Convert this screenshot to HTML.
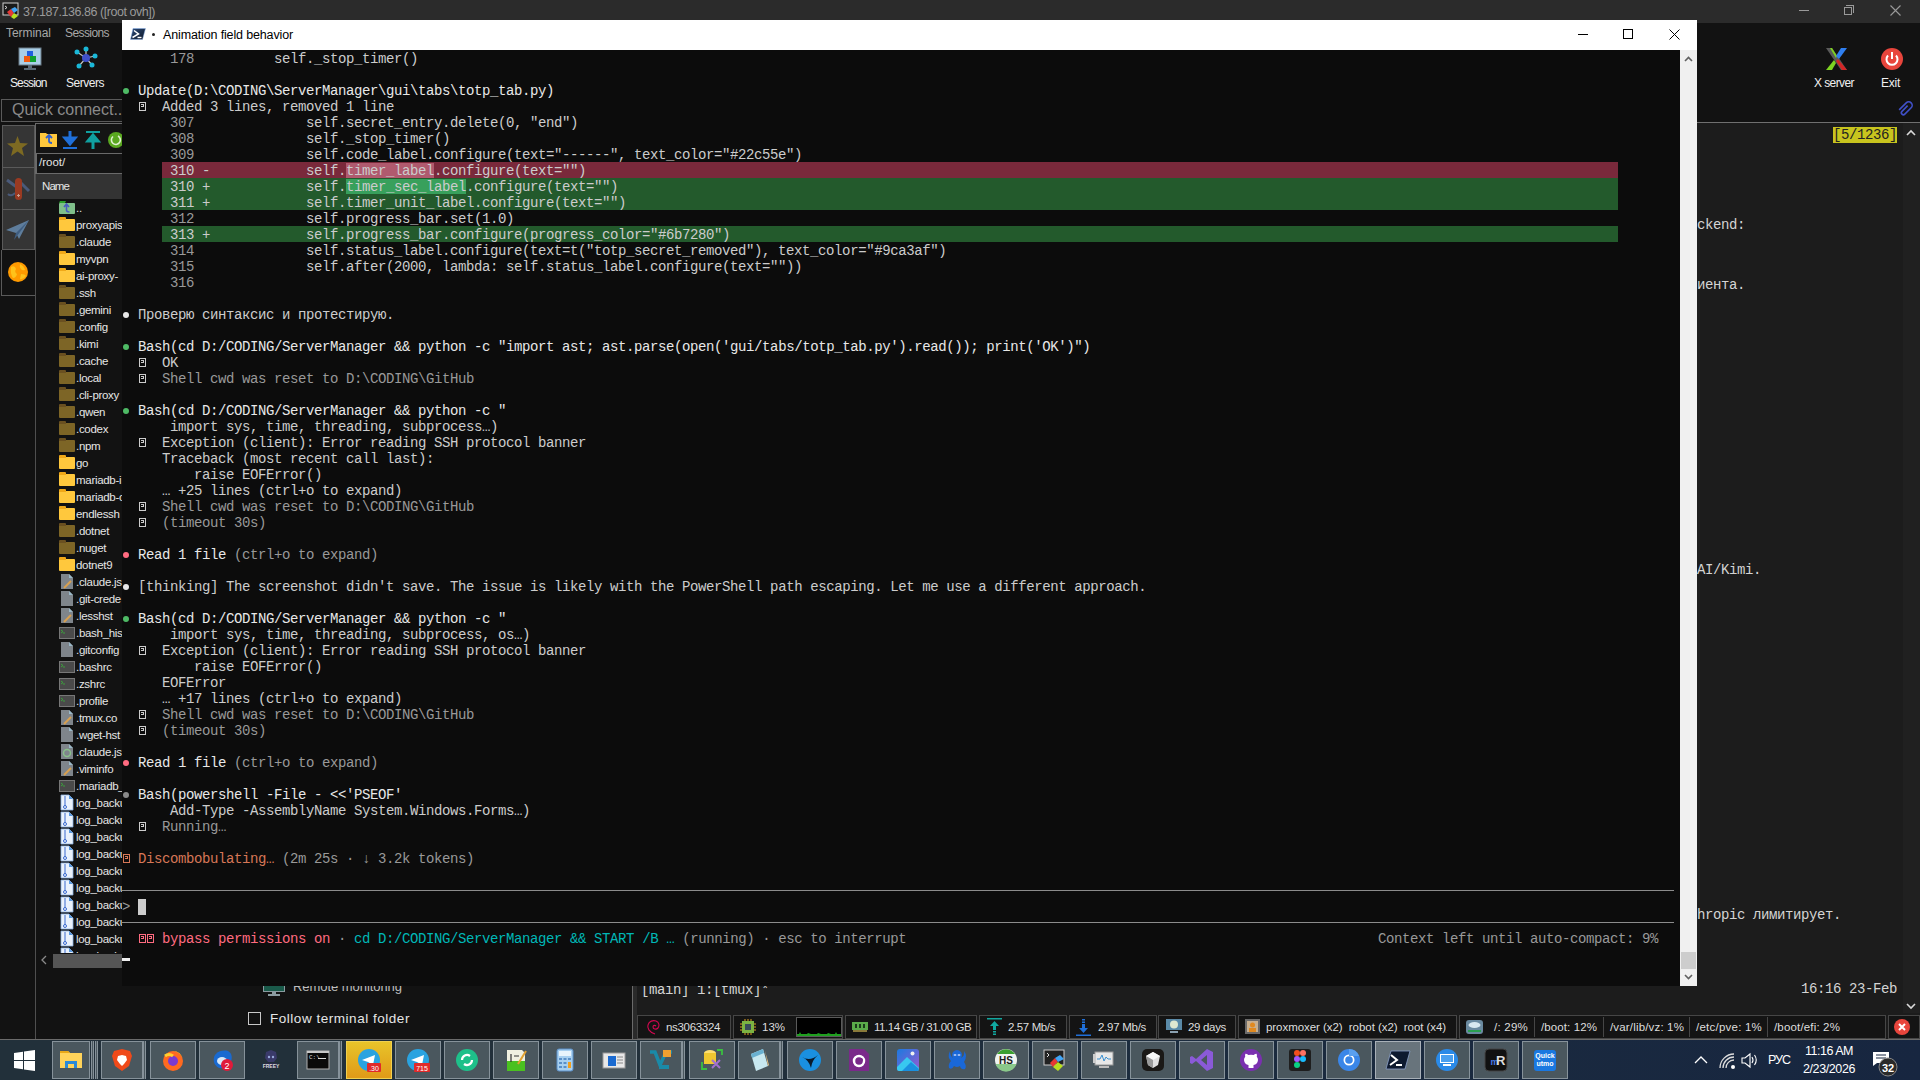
<!DOCTYPE html>
<html><head><meta charset="utf-8">
<style>
*{margin:0;padding:0;box-sizing:border-box}
html,body{width:1920px;height:1080px;overflow:hidden;background:#121212;font-family:"Liberation Sans",sans-serif;position:relative}
.abs{position:absolute}
svg{position:absolute;overflow:visible}
/* moba title bar */
#mtb{position:absolute;left:0;top:0;width:1920px;height:23px;background:#2b2b2b}
.ttl{position:absolute;left:23px;top:5px;font-size:12px;color:#9a9a9a;white-space:nowrap;letter-spacing:-0.2px}
.mtxt{position:absolute;font-size:12px;color:#c8c8c8;white-space:nowrap}
/* PS window */
#ps{position:absolute;left:122px;top:20px;width:1575px;height:966px;background:#0c0c0c}
#ps .tb{position:absolute;left:0;top:0;width:1575px;height:30px;background:#ffffff}
#ps .tb .tt{position:absolute;left:41px;top:8px;font-size:12px;color:#000;white-space:nowrap}
#term{position:absolute;left:0;top:30px;width:1558px;height:936px;overflow:hidden;font-family:"Liberation Mono",monospace;font-size:14px;letter-spacing:-0.4px}
.r{position:absolute;left:0;height:16px;width:1558px}
.r .t{position:absolute;left:0;top:1px;white-space:pre;line-height:16px;height:16px}
.dbg{position:absolute;left:40px;width:1456px;top:0;height:16px}
.tf{display:inline-block;width:8px;height:16px;position:relative;vertical-align:top}
.tf::before{content:"";position:absolute;left:1px;top:3px;width:7px;height:9px;border:1px solid currentColor;box-sizing:border-box}
.tf::after{content:"";position:absolute;left:3px;top:5px;width:3px;height:3px;border:1px solid currentColor;border-left:none;box-sizing:border-box}
.bu{display:inline-block;width:8px;height:16px;position:relative;vertical-align:top}
.bu::before{content:"";position:absolute;left:1px;top:5px;width:6px;height:6px;border-radius:50%;background:var(--c)}
.cur{display:inline-block;width:8px;height:16px;background:#cccccc;vertical-align:top}
.hl{position:absolute;left:0;height:1px;background:#8c8c8c;width:1552px}
#sb{position:absolute;left:1558px;top:30px;width:17px;height:936px;background:#f0f0f0}
/* files */
.fr{position:absolute;left:59px;height:17px;width:63px;overflow:hidden;white-space:nowrap}
.fn{position:absolute;left:17px;top:3px;font-size:11.5px;color:#e6e6e6;letter-spacing:-0.3px}
.fo{position:absolute;left:0;top:3px;width:16px;height:12px;background:var(--c);border-radius:1px}
.fo::before{content:"";position:absolute;left:0;top:-2px;width:7px;height:3px;background:var(--t);border-radius:1px 1px 0 0}
.dc{position:absolute;left:2px;top:1px;width:12px;height:15px;background:#8c8c8c;clip-path:polygon(0 0,65% 0,100% 30%,100% 100%,0 100%)}
.shi{position:absolute;left:0;top:3px;width:16px;height:12px;background:#3c3c3c;border:1px solid #5a5a5a}
.zp{position:absolute;left:2px;top:1px;width:12px;height:15px;background:#dbe9f9;border:1px solid #5a8fd0}
/* moba term */
.mt{position:absolute;font-family:"Liberation Mono",monospace;font-size:14px;letter-spacing:-0.4px;color:#d4d4d4;white-space:pre;line-height:15px}
/* status */
.sp{position:absolute;top:1015px;height:24px;background:#141414;border:1px solid #464646}
.st{position:absolute;top:1021px;font-size:11px;color:#dedede;white-space:nowrap;letter-spacing:-0.1px}
.ss{position:absolute;top:1017px;width:1px;height:20px;background:#464646}
/* taskbar */
#tbar{position:absolute;left:0;top:1040px;width:1920px;height:40px;background:linear-gradient(90deg,#22303a 0%,#22303a 35%,#1c2c3e 60%,#172640 100%)}
.tbi{position:absolute;top:1041px;width:46px;height:38px;border:1px solid #86929a;background:#4a575e}
.tsep{position:absolute;top:1041px;width:3px;height:38px;border-left:1px solid #86929a;border-right:1px solid #86929a;background:#4a575e}
</style></head><body>

<!-- MobaXterm title bar -->
<div id="mtb">
  <svg style="left:2px;top:2px" width="18" height="18" viewBox="0 0 18 18">
    <rect x="1" y="1" width="15" height="12" fill="#1a1a1a" stroke="#d0d0d0" stroke-width="1"/>
    <path d="M3 4 L5 5.5 L3 7" stroke="#ddd" fill="none" stroke-width="1"/>
    <path d="M5 10 L9 7 L12 11 L9 15 Z" fill="#e53935"/>
    <path d="M9 7 L13 5 L16 8 L12 11 Z" fill="#42a5f5"/>
    <path d="M9 15 L12 11 L16 14 L12 17 Z" fill="#b8e020"/>
  </svg>
  <div class="ttl" style="letter-spacing:-0.454px;font-size:12.5px">37.187.136.86 ([root ovh])</div>
  <div class="abs" style="left:1799px;top:10px;width:10px;height:1px;background:#9a9a9a"></div>
  <div class="abs" style="left:1844px;top:7px;width:8px;height:8px;border:1px solid #9a9a9a"></div>
  <div class="abs" style="left:1846px;top:5px;width:8px;height:8px;border-top:1px solid #9a9a9a;border-right:1px solid #9a9a9a"></div>
  <svg style="left:1890px;top:5px" width="11" height="11" viewBox="0 0 11 11"><path d="M0.5 0.5 L10.5 10.5 M10.5 0.5 L0.5 10.5" stroke="#9a9a9a" stroke-width="1.1"/></svg>
</div>

<!-- Moba menu / toolbar -->
<div class="mtxt" style="letter-spacing:-0.045px;left:6px;top:26px;color:#a8a8a8">Terminal</div>
<div class="mtxt" style="letter-spacing:-0.586px;left:65px;top:26px;color:#a8a8a8">Sessions</div>
<svg style="left:19px;top:48px" width="23" height="23" viewBox="0 0 23 23">
  <rect x="0" y="0" width="22" height="17" fill="#a9cfe8" stroke="#6a7a86" stroke-width="1"/>
  <rect x="9" y="17" width="4" height="3" fill="#5a6a76"/><rect x="5" y="20" width="12" height="2" fill="#5a6a76"/>
  <rect x="8" y="3" width="6" height="6" fill="#1f5fe0"/>
  <rect x="5" y="8" width="6" height="6" fill="#f05a10"/>
  <rect x="11" y="8" width="6" height="6" fill="#10a030"/>
</svg>
<svg style="left:74px;top:47px" width="24" height="22" viewBox="0 0 24 22">
  <g stroke="#c8c8c8" stroke-width="1.2"><line x1="12" y1="11" x2="3" y2="5"/><line x1="12" y1="11" x2="12" y2="2"/><line x1="12" y1="11" x2="21" y2="9"/><line x1="12" y1="11" x2="5" y2="19"/><line x1="12" y1="11" x2="18" y2="18"/></g>
  <circle cx="12" cy="11" r="4" fill="#3f4fc8"/>
  <circle cx="3" cy="5" r="2.5" fill="#1ab8d8"/><circle cx="12" cy="2" r="2.5" fill="#1ab8d8"/><circle cx="21" cy="9" r="2.5" fill="#1ab8d8"/><circle cx="5" cy="19" r="2.5" fill="#1ab8d8"/><circle cx="18" cy="18" r="2.5" fill="#1ab8d8"/>
</svg>
<div class="mtxt" style="letter-spacing:-0.884px;left:10px;top:76px;color:#f0f0f0">Session</div>
<div class="mtxt" style="letter-spacing:-0.478px;left:66px;top:76px;color:#f0f0f0">Servers</div>

<svg style="left:1825px;top:48px" width="23" height="23" viewBox="0 0 23 23">
  <path d="M1 0 L7 0 L22 22 L16 22 Z" fill="#5a5a5a"/>
  <path d="M5 0 L7 0 L12 8 L11 10 Z" fill="#7ed321"/>
  <path d="M16 0 L22 0 L14 11 L11 8 Z" fill="#2f7ff0"/>
  <path d="M11 13 L13 11 L22 22 L17 22 Z" fill="#e02020" opacity="0.9"/>
  <path d="M1 22 L7 22 L11 15 L9 12 Z" fill="#7ed321"/>
</svg>
<div class="mtxt" style="letter-spacing:-0.584px;left:1814px;top:76px;color:#f0f0f0">X server</div>
<svg style="left:1881px;top:48px" width="23" height="23" viewBox="0 0 23 23">
  <circle cx="11" cy="11" r="11" fill="#e8453c"/>
  <path d="M7 7.5 A5.5 5.5 0 1 0 15 7.5" stroke="#fff" stroke-width="2" fill="none"/>
  <line x1="11" y1="4" x2="11" y2="11" stroke="#fff" stroke-width="2"/>
</svg>
<div class="mtxt" style="letter-spacing:-0.250px;left:1881px;top:76px;color:#f0f0f0">Exit</div>
<svg style="left:1896px;top:99px" width="19" height="19" viewBox="0 0 19 19">
  <g transform="rotate(45 9.5 9.5)"><path d="M6 15 V5 A3.5 3.5 0 0 1 13 5 V14 A2 2 0 0 1 9 14 V6" stroke="#4050c8" stroke-width="1.6" fill="none" transform="translate(0,0)"/></g>
</svg>

<!-- quick connect -->
<div class="abs" style="left:1px;top:99px;width:122px;height:23px;border:1px solid #5a5a5a;background:#141414"></div>
<div class="abs" style="left:12px;top:101px;font-size:16px;color:#8a8a8a;white-space:nowrap">Quick connect...</div>

<!-- sidebar tabs -->
<div class="abs" style="left:2px;top:125px;width:33px;height:125px;background:#353535;border:1px solid #5a5a5a"></div>
<div class="abs" style="left:3px;top:167px;width:32px;height:1px;background:#5a5a5a"></div>
<div class="abs" style="left:3px;top:209px;width:32px;height:1px;background:#5a5a5a"></div>
<div class="abs" style="left:1px;top:250px;width:35px;height:46px;background:#121212;border-left:1px solid #5a5a5a;border-bottom:1px solid #5a5a5a"></div>
<div class="abs" style="left:35px;top:124px;width:1px;height:916px;background:#4f4f4f"></div>
<svg style="left:7px;top:136px" width="21" height="20" viewBox="0 0 21 20"><path d="M10.5 0 L13 7 L21 7.5 L15 12 L17 20 L10.5 15.5 L4 20 L6 12 L0 7.5 L8 7 Z" fill="#7d6a22"/></svg>
<svg style="left:6px;top:177px" width="24" height="24" viewBox="0 0 24 24">
  <path d="M1 3 L12 11" stroke="#4a5a7a" stroke-width="3"/><path d="M23 14 L15 6" stroke="#4a5a7a" stroke-width="3"/><path d="M2 17 Q5 20 9 16" stroke="#4a5a7a" stroke-width="2" fill="none"/>
  <rect x="9" y="1" width="7" height="22" rx="3.5" fill="#9a3a22"/>
  <path d="M12.5 17 v3 M11 18.5 h3" stroke="#c8a090" stroke-width="1"/>
</svg>
<svg style="left:6px;top:218px" width="24" height="24" viewBox="0 0 24 24">
  <path d="M0 12 L23 2 L13 21 L10 15 Z" fill="#5e7d9c"/><path d="M10 15 L23 2 L8 22 Z" fill="#3e5d80"/>
</svg>
<svg style="left:7px;top:261px" width="22" height="22" viewBox="0 0 22 22">
  <circle cx="11" cy="11" r="10" fill="#ff9a00"/>
  <path d="M4 6 Q8 4 9 8 Q7 11 10 13 Q9 17 6 17 Q3 13 4 6 Z M13 3 Q17 5 18 9 Q15 10 14 8 Q12 6 13 3 Z M14 13 Q18 13 19 15 Q16 19 13 18 Z" fill="#ffc21a"/>
</svg>

<!-- file browser -->
<div class="abs" style="left:35px;top:123px;width:87px;height:1px;background:#6a6a6a"></div><div class="abs" style="left:35px;top:123px;width:1px;height:51px;background:#6a6a6a"></div>
<div class="abs" style="left:36px;top:124px;width:86px;height:29px;background:#141414"></div>
<svg style="left:40px;top:132px" width="17" height="15" viewBox="0 0 17 15"><path d="M0 1 h6 l1 1 h10 v13 h-17 Z" fill="#ffc83d"/><path d="M6 6 l3 -3 l3 3 M9 3 v6 q0 2 3 2" stroke="#2f5fd0" stroke-width="1.8" fill="none"/></svg>
<svg style="left:62px;top:131px" width="16" height="18" viewBox="0 0 16 18"><path d="M8 0 v10 M3 7 l5 6 l5 -6 Z" stroke="#1f6fd8" stroke-width="3" fill="#1f6fd8"/><rect x="1" y="16" width="14" height="2" fill="#1f6fd8"/></svg>
<svg style="left:85px;top:131px" width="16" height="18" viewBox="0 0 16 18"><rect x="1" y="0" width="14" height="2" fill="#10a0a0"/><path d="M8 18 v-10 M3 10 l5 -6 l5 6 Z" stroke="#10a0a0" stroke-width="3" fill="#10a0a0"/></svg>
<svg style="left:108px;top:132px" width="16" height="16" viewBox="0 0 16 16"><circle cx="8" cy="8" r="8" fill="#5aa820"/><path d="M10 4 A4.5 4.5 0 1 1 5 4.5" stroke="#e0f0d0" stroke-width="1.6" fill="none"/></svg>
<div class="abs" style="left:36px;top:153px;width:86px;height:21px;background:#141414;border:1px solid #6a6a6a;border-right:none"></div>
<div class="abs" style="left:39px;top:156px;font-size:11.5px;color:#e6e6e6">/root/</div>
<div class="abs" style="left:36px;top:174px;width:86px;height:25px;background:#333333"></div>
<div class="abs" style="letter-spacing:-0.918px;left:42px;top:180px;font-size:11.5px;color:#e6e6e6">Name</div>
<div class="fr" style="top:199px"><svg style="left:0;top:0" width="16" height="17" viewBox="0 0 16 17"><path d="M0 4 h6 l1 -2 h-6 Z" fill="#2aa02a"/><rect x="0" y="4" width="16" height="11" rx="1" fill="#7fbf8a"/><path d="M5 8 l2.5 -3 l2.5 3 M7.5 5 v6 q0 2 3 2" stroke="#4a5ac0" stroke-width="1.6" fill="none"/></svg><span class="fn">..</span></div>
<div class="fr" style="top:216px"><div class="fo" style="--c:#ffc83d;--t:#f0a818"></div><span class="fn">proxyapis</span></div>
<div class="fr" style="top:233px"><div class="fo" style="--c:#7d6526;--t:#6a5020"></div><span class="fn">.claude</span></div>
<div class="fr" style="top:250px"><div class="fo" style="--c:#ffc83d;--t:#f0a818"></div><span class="fn">myvpn</span></div>
<div class="fr" style="top:267px"><div class="fo" style="--c:#ffc83d;--t:#f0a818"></div><span class="fn">ai-proxy-</span></div>
<div class="fr" style="top:284px"><div class="fo" style="--c:#7d6526;--t:#6a5020"></div><span class="fn">.ssh</span></div>
<div class="fr" style="top:301px"><div class="fo" style="--c:#7d6526;--t:#6a5020"></div><span class="fn">.gemini</span></div>
<div class="fr" style="top:318px"><div class="fo" style="--c:#7d6526;--t:#6a5020"></div><span class="fn">.config</span></div>
<div class="fr" style="top:335px"><div class="fo" style="--c:#7d6526;--t:#6a5020"></div><span class="fn">.kimi</span></div>
<div class="fr" style="top:352px"><div class="fo" style="--c:#7d6526;--t:#6a5020"></div><span class="fn">.cache</span></div>
<div class="fr" style="top:369px"><div class="fo" style="--c:#7d6526;--t:#6a5020"></div><span class="fn">.local</span></div>
<div class="fr" style="top:386px"><div class="fo" style="--c:#7d6526;--t:#6a5020"></div><span class="fn">.cli-proxy</span></div>
<div class="fr" style="top:403px"><div class="fo" style="--c:#7d6526;--t:#6a5020"></div><span class="fn">.qwen</span></div>
<div class="fr" style="top:420px"><div class="fo" style="--c:#7d6526;--t:#6a5020"></div><span class="fn">.codex</span></div>
<div class="fr" style="top:437px"><div class="fo" style="--c:#7d6526;--t:#6a5020"></div><span class="fn">.npm</span></div>
<div class="fr" style="top:454px"><div class="fo" style="--c:#ffc83d;--t:#f0a818"></div><span class="fn">go</span></div>
<div class="fr" style="top:471px"><div class="fo" style="--c:#ffc83d;--t:#f0a818"></div><span class="fn">mariadb-i</span></div>
<div class="fr" style="top:488px"><div class="fo" style="--c:#ffc83d;--t:#f0a818"></div><span class="fn">mariadb-c</span></div>
<div class="fr" style="top:505px"><div class="fo" style="--c:#ffc83d;--t:#f0a818"></div><span class="fn">endlessh</span></div>
<div class="fr" style="top:522px"><div class="fo" style="--c:#7d6526;--t:#6a5020"></div><span class="fn">.dotnet</span></div>
<div class="fr" style="top:539px"><div class="fo" style="--c:#7d6526;--t:#6a5020"></div><span class="fn">.nuget</span></div>
<div class="fr" style="top:556px"><div class="fo" style="--c:#ffc83d;--t:#f0a818"></div><span class="fn">dotnet9</span></div>
<div class="fr" style="top:573px"><svg style="left:0;top:0" width="16" height="17" viewBox="0 0 16 17"><path d="M2 1 H10 L14 5 V16 H2 Z" fill="#7f858b"/><path d="M10 1 L14 5 H10 Z" fill="#9ab8c8"/><path d="M5 15 L12 8" stroke="#d8a050" stroke-width="2"/></svg><span class="fn">.claude.js</span></div>
<div class="fr" style="top:590px"><svg style="left:0;top:0" width="16" height="17" viewBox="0 0 16 17"><path d="M2 1 H10 L14 5 V16 H2 Z" fill="#7f858b"/><path d="M10 1 L14 5 H10 Z" fill="#9ab8c8"/></svg><span class="fn">.git-crede</span></div>
<div class="fr" style="top:607px"><svg style="left:0;top:0" width="16" height="17" viewBox="0 0 16 17"><path d="M2 1 H10 L14 5 V16 H2 Z" fill="#7f858b"/><path d="M10 1 L14 5 H10 Z" fill="#9ab8c8"/><path d="M5 15 L12 8" stroke="#d8a050" stroke-width="2"/></svg><span class="fn">.lesshst</span></div>
<div class="fr" style="top:624px"><svg style="left:0;top:0" width="16" height="17" viewBox="0 0 16 17"><rect x="0.5" y="3.5" width="15" height="11" fill="#4a4a4a" stroke="#777"/><path d="M2 6 L4 7.5 L2 9 M4 9 h2" stroke="#3aaa3a" stroke-width="0.9" fill="none"/></svg><span class="fn">.bash_his</span></div>
<div class="fr" style="top:641px"><svg style="left:0;top:0" width="16" height="17" viewBox="0 0 16 17"><path d="M2 1 H10 L14 5 V16 H2 Z" fill="#7f858b"/><path d="M10 1 L14 5 H10 Z" fill="#9ab8c8"/></svg><span class="fn">.gitconfig</span></div>
<div class="fr" style="top:658px"><svg style="left:0;top:0" width="16" height="17" viewBox="0 0 16 17"><rect x="0.5" y="3.5" width="15" height="11" fill="#4a4a4a" stroke="#777"/><path d="M2 6 L4 7.5 L2 9 M4 9 h2" stroke="#3aaa3a" stroke-width="0.9" fill="none"/></svg><span class="fn">.bashrc</span></div>
<div class="fr" style="top:675px"><svg style="left:0;top:0" width="16" height="17" viewBox="0 0 16 17"><rect x="0.5" y="3.5" width="15" height="11" fill="#4a4a4a" stroke="#777"/><path d="M2 6 L4 7.5 L2 9 M4 9 h2" stroke="#3aaa3a" stroke-width="0.9" fill="none"/></svg><span class="fn">.zshrc</span></div>
<div class="fr" style="top:692px"><svg style="left:0;top:0" width="16" height="17" viewBox="0 0 16 17"><rect x="0.5" y="3.5" width="15" height="11" fill="#4a4a4a" stroke="#777"/><path d="M2 6 L4 7.5 L2 9 M4 9 h2" stroke="#3aaa3a" stroke-width="0.9" fill="none"/></svg><span class="fn">.profile</span></div>
<div class="fr" style="top:709px"><svg style="left:0;top:0" width="16" height="17" viewBox="0 0 16 17"><path d="M2 1 H10 L14 5 V16 H2 Z" fill="#7f858b"/><path d="M10 1 L14 5 H10 Z" fill="#9ab8c8"/><path d="M5 15 L12 8" stroke="#d8a050" stroke-width="2"/></svg><span class="fn">.tmux.co</span></div>
<div class="fr" style="top:726px"><svg style="left:0;top:0" width="16" height="17" viewBox="0 0 16 17"><path d="M2 1 H10 L14 5 V16 H2 Z" fill="#7f858b"/><path d="M10 1 L14 5 H10 Z" fill="#9ab8c8"/></svg><span class="fn">.wget-hst</span></div>
<div class="fr" style="top:743px"><svg style="left:0;top:0" width="16" height="17" viewBox="0 0 16 17"><path d="M2 1 H10 L14 5 V16 H2 Z" fill="#7f858b"/><path d="M10 1 L14 5 H10 Z" fill="#9ab8c8"/><circle cx="8" cy="10" r="3.5" fill="none" stroke="#8ac08a" stroke-width="1.5"/></svg><span class="fn">.claude.js</span></div>
<div class="fr" style="top:760px"><svg style="left:0;top:0" width="16" height="17" viewBox="0 0 16 17"><path d="M2 1 H10 L14 5 V16 H2 Z" fill="#7f858b"/><path d="M10 1 L14 5 H10 Z" fill="#9ab8c8"/><path d="M5 15 L12 8" stroke="#d8a050" stroke-width="2"/></svg><span class="fn">.viminfo</span></div>
<div class="fr" style="top:777px"><svg style="left:0;top:0" width="16" height="17" viewBox="0 0 16 17"><rect x="0.5" y="3.5" width="15" height="11" fill="#4a4a4a" stroke="#777"/><path d="M2 6 L4 7.5 L2 9 M4 9 h2" stroke="#3aaa3a" stroke-width="0.9" fill="none"/></svg><span class="fn">.mariadb_</span></div>
<div class="fr" style="top:794px"><svg style="left:0;top:0" width="16" height="17" viewBox="0 0 16 17"><path d="M2 1 H10 L14 5 V16 H2 Z" fill="#eaf2fc" stroke="#8ab0e0" stroke-width="0.8"/><path d="M10 1 L14 5 H10 Z" fill="#5a9ae0"/><path d="M6 2 V12" stroke="#3a6ad0" stroke-width="1"/><circle cx="6" cy="13" r="1.5" fill="none" stroke="#3a6ad0" stroke-width="1"/></svg><span class="fn">log_backu</span></div>
<div class="fr" style="top:811px"><svg style="left:0;top:0" width="16" height="17" viewBox="0 0 16 17"><path d="M2 1 H10 L14 5 V16 H2 Z" fill="#eaf2fc" stroke="#8ab0e0" stroke-width="0.8"/><path d="M10 1 L14 5 H10 Z" fill="#5a9ae0"/><path d="M6 2 V12" stroke="#3a6ad0" stroke-width="1"/><circle cx="6" cy="13" r="1.5" fill="none" stroke="#3a6ad0" stroke-width="1"/></svg><span class="fn">log_backu</span></div>
<div class="fr" style="top:828px"><svg style="left:0;top:0" width="16" height="17" viewBox="0 0 16 17"><path d="M2 1 H10 L14 5 V16 H2 Z" fill="#eaf2fc" stroke="#8ab0e0" stroke-width="0.8"/><path d="M10 1 L14 5 H10 Z" fill="#5a9ae0"/><path d="M6 2 V12" stroke="#3a6ad0" stroke-width="1"/><circle cx="6" cy="13" r="1.5" fill="none" stroke="#3a6ad0" stroke-width="1"/></svg><span class="fn">log_backu</span></div>
<div class="fr" style="top:845px"><svg style="left:0;top:0" width="16" height="17" viewBox="0 0 16 17"><path d="M2 1 H10 L14 5 V16 H2 Z" fill="#eaf2fc" stroke="#8ab0e0" stroke-width="0.8"/><path d="M10 1 L14 5 H10 Z" fill="#5a9ae0"/><path d="M6 2 V12" stroke="#3a6ad0" stroke-width="1"/><circle cx="6" cy="13" r="1.5" fill="none" stroke="#3a6ad0" stroke-width="1"/></svg><span class="fn">log_backu</span></div>
<div class="fr" style="top:862px"><svg style="left:0;top:0" width="16" height="17" viewBox="0 0 16 17"><path d="M2 1 H10 L14 5 V16 H2 Z" fill="#eaf2fc" stroke="#8ab0e0" stroke-width="0.8"/><path d="M10 1 L14 5 H10 Z" fill="#5a9ae0"/><path d="M6 2 V12" stroke="#3a6ad0" stroke-width="1"/><circle cx="6" cy="13" r="1.5" fill="none" stroke="#3a6ad0" stroke-width="1"/></svg><span class="fn">log_backu</span></div>
<div class="fr" style="top:879px"><svg style="left:0;top:0" width="16" height="17" viewBox="0 0 16 17"><path d="M2 1 H10 L14 5 V16 H2 Z" fill="#eaf2fc" stroke="#8ab0e0" stroke-width="0.8"/><path d="M10 1 L14 5 H10 Z" fill="#5a9ae0"/><path d="M6 2 V12" stroke="#3a6ad0" stroke-width="1"/><circle cx="6" cy="13" r="1.5" fill="none" stroke="#3a6ad0" stroke-width="1"/></svg><span class="fn">log_backu</span></div>
<div class="fr" style="top:896px"><svg style="left:0;top:0" width="16" height="17" viewBox="0 0 16 17"><path d="M2 1 H10 L14 5 V16 H2 Z" fill="#eaf2fc" stroke="#8ab0e0" stroke-width="0.8"/><path d="M10 1 L14 5 H10 Z" fill="#5a9ae0"/><path d="M6 2 V12" stroke="#3a6ad0" stroke-width="1"/><circle cx="6" cy="13" r="1.5" fill="none" stroke="#3a6ad0" stroke-width="1"/></svg><span class="fn">log_backu</span></div>
<div class="fr" style="top:913px"><svg style="left:0;top:0" width="16" height="17" viewBox="0 0 16 17"><path d="M2 1 H10 L14 5 V16 H2 Z" fill="#eaf2fc" stroke="#8ab0e0" stroke-width="0.8"/><path d="M10 1 L14 5 H10 Z" fill="#5a9ae0"/><path d="M6 2 V12" stroke="#3a6ad0" stroke-width="1"/><circle cx="6" cy="13" r="1.5" fill="none" stroke="#3a6ad0" stroke-width="1"/></svg><span class="fn">log_backu</span></div>
<div class="fr" style="top:930px"><svg style="left:0;top:0" width="16" height="17" viewBox="0 0 16 17"><path d="M2 1 H10 L14 5 V16 H2 Z" fill="#eaf2fc" stroke="#8ab0e0" stroke-width="0.8"/><path d="M10 1 L14 5 H10 Z" fill="#5a9ae0"/><path d="M6 2 V12" stroke="#3a6ad0" stroke-width="1"/><circle cx="6" cy="13" r="1.5" fill="none" stroke="#3a6ad0" stroke-width="1"/></svg><span class="fn">log_backu</span></div>
<div class="fr" style="top:947px"><svg style="left:0;top:0" width="16" height="17" viewBox="0 0 16 17"><path d="M2 1 H10 L14 5 V16 H2 Z" fill="#eaf2fc" stroke="#8ab0e0" stroke-width="0.8"/><path d="M10 1 L14 5 H10 Z" fill="#5a9ae0"/><path d="M6 2 V12" stroke="#3a6ad0" stroke-width="1"/><circle cx="6" cy="13" r="1.5" fill="none" stroke="#3a6ad0" stroke-width="1"/></svg><span class="fn">log_backu</span></div>
<div class="abs" style="left:36px;top:953px;width:86px;height:25px;background:#121212"></div>
<svg style="left:40px;top:955px" width="8" height="10" viewBox="0 0 8 10"><path d="M6 1 L2 5 L6 9" stroke="#8a8a8a" stroke-width="1.3" fill="none"/></svg>
<div class="abs" style="left:53px;top:954px;width:69px;height:14px;background:#555555"></div>

<!-- Moba terminal (right/bottom) -->
<div class="abs" style="left:633px;top:122px;width:1287px;height:1px;background:#707070"></div>
<div class="abs" style="left:634px;top:123px;width:1286px;height:892px;background:#1c1c1c"></div>
<div class="abs" style="left:632px;top:123px;width:1px;height:916px;background:#6a6a6a"></div><div class="abs" style="left:633px;top:123px;width:4px;height:916px;background:#2a2a2a"></div>
<div class="abs" style="left:1903px;top:123px;width:17px;height:890px;background:#202020"></div>
<svg style="left:1906px;top:129px" width="10" height="7" viewBox="0 0 10 7"><path d="M1 6 L5 2 L9 6" stroke="#dadada" stroke-width="1.6" fill="none"/></svg>
<svg style="left:1906px;top:1003px" width="10" height="7" viewBox="0 0 10 7"><path d="M1 1 L5 5 L9 1" stroke="#dadada" stroke-width="1.6" fill="none"/></svg>
<div class="abs" style="left:1833px;top:127px;width:64px;height:16px;background:#c8c41e"></div>
<div class="mt" style="left:1833px;top:128px;color:#222">[5/1236]</div>
<div class="mt" style="left:1697px;top:218px">ckend:</div>
<div class="mt" style="left:1697px;top:278px">иента.</div>
<div class="mt" style="left:1697px;top:563px">AI/Kimi.</div>
<div class="mt" style="left:1697px;top:908px">hropic лимитирует.</div>
<div class="mt" style="left:641px;top:983px">[main] 1:[tmux]*</div>
<div class="mt" style="left:1801px;top:982px">16:16 23-Feb</div>

<!-- below PS window -->
<svg style="left:263px;top:978px" width="23" height="18" viewBox="0 0 23 18"><rect x="0.5" y="0.5" width="21" height="13" fill="#1a5a4a" stroke="#8a9aa0"/><rect x="9" y="14" width="4" height="2" fill="#8a9aa0"/><rect x="5" y="16" width="12" height="2" fill="#8a9aa0"/></svg>
<div class="mtxt" style="letter-spacing:-0.051px;left:293px;top:979px;font-size:13px;color:#bdbdbd">Remote monitoring</div>
<div class="abs" style="left:248px;top:1012px;width:13px;height:13px;border:1px solid #c8c8c8;background:#111"></div>
<div class="mtxt" style="letter-spacing:0.528px;left:270px;top:1011px;font-size:13.5px;color:#e6e6e6">Follow terminal folder</div>

<!-- PS window -->
<div id="ps">
  <div class="tb">
    <svg style="left:8px;top:8px" width="16" height="12" viewBox="0 0 16 12">
      <defs><linearGradient id="psg" x1="0" y1="0" x2="1" y2="1"><stop offset="0" stop-color="#2a4a78"/><stop offset="1" stop-color="#0e1626"/></linearGradient></defs>
      <path d="M3 0.5 L15.5 0.5 L12.5 11.5 L0.5 11.5 Z" fill="url(#psg)" stroke="#8ab0e8" stroke-width="0.5"/>
      <path d="M4 2.5 L8.5 6 L2.5 9.5" stroke="#fff" stroke-width="1.5" fill="none"/><path d="M7.5 9.5 h4" stroke="#fff" stroke-width="1.4"/>
    </svg>
    <div class="abs" style="left:30px;top:13px;width:3px;height:3px;background:#222;border-radius:50%"></div>
    <div class="tt" style="letter-spacing:-0.143px;font-size:12.5px">Animation field behavior</div>
    <div class="abs" style="left:1456px;top:14px;width:10px;height:1px;background:#000"></div>
    <div class="abs" style="left:1501px;top:9px;width:10px;height:10px;border:1px solid #000"></div>
    <svg style="left:1547px;top:9px" width="11" height="11" viewBox="0 0 11 11"><path d="M0.5 0.5 L10.5 10.5 M10.5 0.5 L0.5 10.5" stroke="#000" stroke-width="1"/></svg>
  </div>
  <div id="term">
<div class="r" style="top:0px"><div class="t"><span style="color:#999999">      178</span><span style="color:#cccccc">          self._stop_timer()</span></div></div>
<div class="r" style="top:32px"><div class="t"><span class="bu" style="--c:#4eba65"></span> <span style="color:#e8e8e8">Update(D:\CODING\ServerManager\gui\tabs\totp_tab.py)</span></div></div>
<div class="r" style="top:48px"><div class="t">  <span class="tf" style="color:#cccccc"></span>  <span style="color:#cccccc">Added 3 lines, removed 1 line</span></div></div>
<div class="r" style="top:64px"><div class="t"><span style="color:#999999">      307  </span><span style="color:#cccccc">            self.secret_entry.delete(0, &quot;end&quot;)</span></div></div>
<div class="r" style="top:80px"><div class="t"><span style="color:#999999">      308  </span><span style="color:#cccccc">            self._stop_timer()</span></div></div>
<div class="r" style="top:96px"><div class="t"><span style="color:#999999">      309  </span><span style="color:#cccccc">            self.code_label.configure(text=&quot;------&quot;, text_color=&quot;#22c55e&quot;)</span></div></div>
<div class="r" style="top:112px"><div class="dbg" style="background:#7a293b"></div><div class="t"><span style="color:#cccccc">      310 -</span><span style="color:#cccccc">            self.</span><span style="color:#cccccc;background:#b05a6e">timer_label</span><span style="color:#cccccc">.configure(text=&quot;&quot;)</span></div></div>
<div class="r" style="top:128px"><div class="dbg" style="background:#235a2c"></div><div class="t"><span style="color:#cccccc">      310 +</span><span style="color:#cccccc">            self.</span><span style="color:#cccccc;background:#38a05c">timer_sec_label</span><span style="color:#cccccc">.configure(text=&quot;&quot;)</span></div></div>
<div class="r" style="top:144px"><div class="dbg" style="background:#235a2c"></div><div class="t"><span style="color:#cccccc">      311 +</span><span style="color:#cccccc">            self.timer_unit_label.configure(text=&quot;&quot;)</span></div></div>
<div class="r" style="top:160px"><div class="t"><span style="color:#999999">      312  </span><span style="color:#cccccc">            self.progress_bar.set(1.0)</span></div></div>
<div class="r" style="top:176px"><div class="dbg" style="background:#235a2c"></div><div class="t"><span style="color:#cccccc">      313 +</span><span style="color:#cccccc">            self.progress_bar.configure(progress_color=&quot;#6b7280&quot;)</span></div></div>
<div class="r" style="top:192px"><div class="t"><span style="color:#999999">      314  </span><span style="color:#cccccc">            self.status_label.configure(text=t(&quot;totp_secret_removed&quot;), text_color=&quot;#9ca3af&quot;)</span></div></div>
<div class="r" style="top:208px"><div class="t"><span style="color:#999999">      315  </span><span style="color:#cccccc">            self.after(2000, lambda: self.status_label.configure(text=&quot;&quot;))</span></div></div>
<div class="r" style="top:224px"><div class="t"><span style="color:#999999">      316</span></div></div>
<div class="r" style="top:256px"><div class="t"><span class="bu" style="--c:#e8e8e8"></span> <span style="color:#cccccc">Проверю синтаксис и протестирую.</span></div></div>
<div class="r" style="top:288px"><div class="t"><span class="bu" style="--c:#4eba65"></span> <span style="color:#e8e8e8">Bash(cd D:/CODING/ServerManager &amp;&amp; python -c &quot;import ast; ast.parse(open(&#x27;gui/tabs/totp_tab.py&#x27;).read()); print(&#x27;OK&#x27;)&quot;)</span></div></div>
<div class="r" style="top:304px"><div class="t">  <span class="tf" style="color:#cccccc"></span>  <span style="color:#cccccc">OK</span></div></div>
<div class="r" style="top:320px"><div class="t">  <span class="tf" style="color:#cccccc"></span>  <span style="color:#999999">Shell cwd was reset to D:\CODING\GitHub</span></div></div>
<div class="r" style="top:352px"><div class="t"><span class="bu" style="--c:#4eba65"></span> <span style="color:#e8e8e8">Bash(cd D:/CODING/ServerManager &amp;&amp; python -c &quot;</span></div></div>
<div class="r" style="top:368px"><div class="t"><span style="color:#cccccc">      import sys, time, threading, subprocess…)</span></div></div>
<div class="r" style="top:384px"><div class="t">  <span class="tf" style="color:#cccccc"></span>  <span style="color:#cccccc">Exception (client): Error reading SSH protocol banner</span></div></div>
<div class="r" style="top:400px"><div class="t"><span style="color:#cccccc">     Traceback (most recent call last):</span></div></div>
<div class="r" style="top:416px"><div class="t"><span style="color:#cccccc">         raise EOFError()</span></div></div>
<div class="r" style="top:432px"><div class="t"><span style="color:#cccccc">     … +25 lines (ctrl+o to expand)</span></div></div>
<div class="r" style="top:448px"><div class="t">  <span class="tf" style="color:#cccccc"></span>  <span style="color:#999999">Shell cwd was reset to D:\CODING\GitHub</span></div></div>
<div class="r" style="top:464px"><div class="t">  <span class="tf" style="color:#cccccc"></span>  <span style="color:#999999">(timeout 30s)</span></div></div>
<div class="r" style="top:496px"><div class="t"><span class="bu" style="--c:#ff6b80"></span> <span style="color:#e8e8e8">Read 1 file </span><span style="color:#999999">(ctrl+o to expand)</span></div></div>
<div class="r" style="top:528px"><div class="t"><span class="bu" style="--c:#e8e8e8"></span> <span style="color:#cccccc">[thinking] The screenshot didn&#x27;t save. The issue is likely with the PowerShell path escaping. Let me use a different approach.</span></div></div>
<div class="r" style="top:560px"><div class="t"><span class="bu" style="--c:#4eba65"></span> <span style="color:#e8e8e8">Bash(cd D:/CODING/ServerManager &amp;&amp; python -c &quot;</span></div></div>
<div class="r" style="top:576px"><div class="t"><span style="color:#cccccc">      import sys, time, threading, subprocess, os…)</span></div></div>
<div class="r" style="top:592px"><div class="t">  <span class="tf" style="color:#cccccc"></span>  <span style="color:#cccccc">Exception (client): Error reading SSH protocol banner</span></div></div>
<div class="r" style="top:608px"><div class="t"><span style="color:#cccccc">         raise EOFError()</span></div></div>
<div class="r" style="top:624px"><div class="t"><span style="color:#cccccc">     EOFError</span></div></div>
<div class="r" style="top:640px"><div class="t"><span style="color:#cccccc">     … +17 lines (ctrl+o to expand)</span></div></div>
<div class="r" style="top:656px"><div class="t">  <span class="tf" style="color:#cccccc"></span>  <span style="color:#999999">Shell cwd was reset to D:\CODING\GitHub</span></div></div>
<div class="r" style="top:672px"><div class="t">  <span class="tf" style="color:#cccccc"></span>  <span style="color:#999999">(timeout 30s)</span></div></div>
<div class="r" style="top:704px"><div class="t"><span class="bu" style="--c:#ff6b80"></span> <span style="color:#e8e8e8">Read 1 file </span><span style="color:#999999">(ctrl+o to expand)</span></div></div>
<div class="r" style="top:736px"><div class="t"><span class="bu" style="--c:#8a8a8a"></span> <span style="color:#e8e8e8">Bash(powershell -File - &lt;&lt;&#x27;PSEOF&#x27;</span></div></div>
<div class="r" style="top:752px"><div class="t"><span style="color:#cccccc">      Add-Type -AssemblyName System.Windows.Forms…)</span></div></div>
<div class="r" style="top:768px"><div class="t">  <span class="tf" style="color:#cccccc"></span>  <span style="color:#999999">Running…</span></div></div>
<div class="r" style="top:800px"><div class="t"><span class="tf" style="color:#d77757"></span> <span style="color:#d77757">Discombobulating…</span><span style="color:#999999"> (2m 25s · ↓ 3.2k tokens)</span></div></div>
<div class="r" style="top:848px"><div class="t"><span style="color:#999999">&gt;</span> <span class="cur"></span></div></div>
<div class="r" style="top:880px"><div class="t">  <span class="tf" style="color:#ff6b80"></span><span class="tf" style="color:#ff6b80"></span> <span style="color:#ff6b80">bypass permissions on</span><span style="color:#999999"> · </span><span style="color:#00b7b7">cd D:/CODING/ServerManager &amp;&amp; START /B … </span><span style="color:#999999">(running) · esc to interrupt</span></div></div>
<div class="r" style="top:880px;left:1256px"><div class="t"><span style="color:#999999">Context left until auto-compact: 9%</span></div></div>
  <div class="hl" style="top:840px"></div>
  <div class="hl" style="top:872px"></div>
  <div class="abs" style="left:0;top:908px;width:8px;height:3px;background:#f0f0f0"></div>
  </div>
  <div id="sb">
    <svg style="left:4px;top:6px" width="9" height="6" viewBox="0 0 9 6"><path d="M1 5 L4.5 1.5 L8 5" stroke="#606060" stroke-width="1.6" fill="none"/></svg>
    <div class="abs" style="left:1px;top:902px;width:15px;height:17px;background:#cdcdcd"></div>
    <svg style="left:4px;top:924px" width="9" height="6" viewBox="0 0 9 6"><path d="M1 1 L4.5 4.5 L8 1" stroke="#606060" stroke-width="1.6" fill="none"/></svg>
  </div>
</div>

<!-- status bar -->
<div class="abs" style="left:637px;top:1013px;width:1283px;height:26px;background:#1c1c1c"></div>
<div class="sp" style="left:637px;width:94px"></div>
<div class="sp" style="left:733px;width:110px"></div>
<div class="sp" style="left:845px;width:132px"></div>
<div class="sp" style="left:979px;width:88px"></div>
<div class="sp" style="left:1069px;width:88px"></div>
<div class="sp" style="left:1158px;width:78px"></div>
<div class="sp" style="left:1238px;width:219px"></div>
<div class="sp" style="left:1459px;width:427px"></div>
<div class="sp" style="left:1888px;width:32px"></div>
<div class="st" style="letter-spacing:-0.319px;left:666px;font-size:11.5px">ns3063324</div>
<div class="st" style="letter-spacing:0.000px;left:762px;font-size:11.5px">13%</div>
<div class="st" style="letter-spacing:-0.463px;left:874px;font-size:11.5px">11.14 GB / 31.00 GB</div>
<div class="st" style="letter-spacing:-0.384px;left:1008px;font-size:11.5px">2.57 Mb/s</div>
<div class="st" style="letter-spacing:-0.273px;left:1098px;font-size:11.5px">2.97 Mb/s</div>
<div class="st" style="letter-spacing:-0.321px;left:1188px;font-size:11.5px">29 days</div>
<div class="st" style="letter-spacing:-0.054px;left:1266px;font-size:11.5px">proxmoxer (x2)&nbsp; robot (x2)&nbsp; root (x4)</div>
<div class="st" style="letter-spacing:0.240px;left:1494px;font-size:11.5px">/: 29%</div>
<div class="st" style="letter-spacing:0.108px;left:1541px;font-size:11.5px">/boot: 12%</div>
<div class="st" style="letter-spacing:0.165px;left:1610px;font-size:11.5px">/var/lib/vz: 1%</div>
<div class="st" style="letter-spacing:0.232px;left:1696px;font-size:11.5px">/etc/pve: 1%</div>
<div class="st" style="letter-spacing:0.165px;left:1774px;font-size:11.5px">/boot/efi: 2%</div>
<div class="ss" style="left:1534px"></div>
<div class="ss" style="left:1603px"></div>
<div class="ss" style="left:1689px"></div>
<div class="ss" style="left:1767px"></div>
<div class="abs" style="left:796px;top:1017px;width:46px;height:20px;background:#000;border:1px solid #5a5a5a"></div>
<svg style="left:797px;top:1018px" width="44" height="18" viewBox="0 0 44 18"><path d="M0 16 L2 16 L3 14 L4 16 L10 16 L11 15 L14 16 L20 16 L21 15 L24 16 L30 16 L31 15 L34 16 L38 16 L39 14 L40 16 L44 16 L44 18 L0 18 Z" fill="#1fa01f"/></svg>
<svg style="left:646px;top:1019px" width="15" height="16" viewBox="0 0 15 16"><path d="M9 15 C3 13 1 9 2 6 C3 2 7 1 10 2 C13 3 14 7 12 9 C10 11 7 10 7 8 C7 6 9 6 10 7" stroke="#d70751" stroke-width="1.1" fill="none"/></svg>
<svg style="left:740px;top:1019px" width="16" height="16" viewBox="0 0 16 16"><rect x="2" y="2" width="12" height="12" fill="#7cb342"/><rect x="5" y="5" width="6" height="6" fill="#3a4a5a"/><path d="M0 5h2M0 8h2M0 11h2M14 5h2M14 8h2M14 11h2M5 0v2M8 0v2M11 0v2M5 14v2M8 14v2M11 14v2" stroke="#e0a020" stroke-width="1"/></svg>
<svg style="left:852px;top:1021px" width="16" height="12" viewBox="0 0 16 12"><rect x="0" y="1" width="16" height="8" fill="#5aaa4a"/><rect x="3" y="3" width="2" height="4" fill="#1a3a1a"/><rect x="7" y="3" width="2" height="4" fill="#1a3a1a"/><rect x="11" y="3" width="2" height="4" fill="#1a3a1a"/><rect x="1" y="9" width="14" height="2" fill="#8a7a3a"/></svg>
<svg style="left:987px;top:1018px" width="15" height="18" viewBox="0 0 15 18"><rect x="0" y="0" width="15" height="1.5" fill="#10a8a0"/><path d="M7.5 3 L12 8 H9 V12 H6 V8 H3 Z" fill="#10a8a0"/><rect x="6" y="13" width="3" height="1.5" fill="#10a8a0"/><rect x="6" y="15.5" width="3" height="1.5" fill="#10a8a0"/></svg>
<svg style="left:1076px;top:1018px" width="15" height="18" viewBox="0 0 15 18"><rect x="0" y="16.5" width="15" height="1.5" fill="#1f6fd8"/><path d="M7.5 15 L12 10 H9 V6 H6 V10 H3 Z" fill="#1f6fd8"/><rect x="6" y="1" width="3" height="1.5" fill="#1f6fd8"/><rect x="6" y="3.5" width="3" height="1.5" fill="#1f6fd8"/></svg>
<svg style="left:1166px;top:1019px" width="16" height="15" viewBox="0 0 16 15"><rect x="0" y="0" width="16" height="11" fill="#5a8aa8"/><circle cx="8" cy="5.5" r="4" fill="#e0e8d0"/><rect x="4" y="12" width="8" height="2" fill="#8aa0b0"/></svg>
<svg style="left:1245px;top:1019px" width="15" height="15" viewBox="0 0 15 15"><rect x="0" y="0" width="15" height="15" fill="#6a6a6a"/><rect x="2" y="2" width="11" height="11" fill="#c8b090"/><circle cx="7.5" cy="6" r="2.5" fill="#e08a20"/><rect x="4" y="9" width="7" height="4" fill="#e08a20"/></svg>
<svg style="left:1466px;top:1018px" width="17" height="17" viewBox="0 0 17 17"><rect x="0" y="2" width="17" height="14" rx="3" fill="#6a8aa0"/><ellipse cx="8.5" cy="7" rx="6" ry="3" fill="#d8e8f0"/><rect x="2" y="12" width="13" height="2" fill="#2aa050"/></svg>
<svg style="left:1894px;top:1019px" width="16" height="16" viewBox="0 0 16 16"><circle cx="8" cy="8" r="8" fill="#e8453c"/><path d="M5 5 L11 11 M11 5 L5 11" stroke="#fff" stroke-width="2"/></svg>

<div class="abs" style="left:0;top:1039px;width:1920px;height:1px;background:#6a6a6a"></div>
<!-- taskbar -->
<div id="tbar"></div>
<svg style="left:14px;top:1050px" width="21" height="21" viewBox="0 0 21 21"><path d="M0 3 L9 1.8 V10 H0 Z M10 1.6 L21 0 V10 H10 Z M0 11 H9 V19.2 L0 18 Z M10 11 H21 V21 L10 19.4 Z" fill="#fff"/></svg>
<div class="tbi" style="left:52px;width:38px"></div>
<div class="tsep" style="left:91px"></div>
<div class="tsep" style="left:95px"></div>
<svg style="left:59px;top:1048px" width="24" height="24" viewBox="0 0 24 24"><path d="M1 3 h8 l2 2 h12 v15 h-22 Z" fill="#ffd35a"/><path d="M1 3 h8 l2 2 h-10 Z" fill="#e8a818"/><path d="M6 20 V13 H18 V20 H15 V16 H9 V20 Z" fill="#2a8ad8"/></svg>
<div class="tbi" style="left:101px;width:42px"></div>
<div class="tsep" style="left:143px"></div>
<svg style="left:110px;top:1048px" width="24" height="24" viewBox="0 0 24 24"><path d="M12 1 L20 3 L22 8 L19 18 L12 23 L5 18 L2 8 L4 3 Z" fill="#f04a1a"/><path d="M8 8 L12 7 L16 8 L17 12 L14 16 L12 18 L10 16 L7 12 Z" fill="#fff"/></svg>
<div class="tbi" style="left:150px;width:46px"></div>
<svg style="left:161px;top:1048px" width="24" height="24" viewBox="0 0 24 24"><circle cx="12" cy="13" r="10" fill="#ff6a20"/><path d="M12 3 C20 3 22 10 22 13 C22 8 18 4 12 3 Z" fill="#ffbd20"/><circle cx="12" cy="13" r="5" fill="#7a3ad0"/><path d="M4 8 Q8 5 12 8" stroke="#ffcf30" stroke-width="3" fill="none"/></svg>
<div class="tbi" style="left:199px;width:46px"></div>
<svg style="left:210px;top:1048px" width="24" height="24" viewBox="0 0 24 24"><path d="M4 14 C2 6 10 1 18 3 C22 5 23 10 20 16 C16 22 6 22 4 14 Z" fill="#1a6ad0"/><ellipse cx="12" cy="13" rx="5" ry="4" fill="#d8e8f8"/><circle cx="17" cy="17" r="6" fill="#e01a3a"/><text x="17" y="21" font-size="9" fill="#fff" text-anchor="middle" font-family="Liberation Sans">2</text></svg>
<svg style="left:259px;top:1048px" width="24" height="24" viewBox="0 0 24 24"><path d="M7 4 L12 2 L17 4 L18 10 L15 14 L9 14 L6 10 Z" fill="#3a3a6a"/><circle cx="10" cy="9" r="1.2" fill="#9ad"/><circle cx="14" cy="9" r="1.2" fill="#9ad"/><rect x="6" y="15" width="12" height="5" fill="#2a2a4a"/><text x="12" y="20" font-size="5" fill="#ddd" text-anchor="middle" font-family="Liberation Sans" font-weight="bold">FREEY</text></svg>
<div class="tbi" style="left:297px;width:42px"></div>
<div class="tsep" style="left:339px"></div>
<svg style="left:306px;top:1048px" width="24" height="24" viewBox="0 0 24 24"><rect x="1" y="3" width="22" height="18" fill="#0a0a0a" stroke="#b0b0b0" stroke-width="1"/><rect x="1" y="3" width="22" height="2" fill="#c8c8c8"/><text x="3" y="11" font-size="6" fill="#ddd" font-family="Liberation Mono">C:\</text><rect x="12" y="10" width="8" height="1" fill="#ddd"/></svg>
<div class="tbi" style="left:346px;width:46px;background:linear-gradient(180deg,#e8c42a,#e09a18);border-color:#f0d050"></div>
<svg style="left:357px;top:1048px" width="24" height="24" viewBox="0 0 24 24"><circle cx="12" cy="12" r="11" fill="#2aa3e0"/><path d="M5 12 L18 7 L16 17 L11 14 Z" fill="#fff"/><rect x="10" y="15" width="14" height="9" rx="1" fill="#e02a2a"/><text x="17" y="22.5" font-size="7" fill="#fff" text-anchor="middle" font-family="Liberation Sans">.30</text></svg>
<div class="tbi" style="left:395px;width:46px"></div>
<svg style="left:406px;top:1048px" width="24" height="24" viewBox="0 0 24 24"><circle cx="12" cy="12" r="11" fill="#2aa3e0"/><path d="M5 12 L18 7 L16 17 L11 14 Z" fill="#fff"/><rect x="8" y="15" width="16" height="9" rx="1" fill="#e02a2a"/><text x="16" y="22.5" font-size="7" fill="#fff" text-anchor="middle" font-family="Liberation Sans">715</text></svg>
<div class="tbi" style="left:444px;width:46px"></div>
<svg style="left:455px;top:1048px" width="24" height="24" viewBox="0 0 24 24"><circle cx="12" cy="12" r="11" fill="#1ec08a"/><path d="M7 12 A5 5 0 0 1 15 8 M17 12 A5 5 0 0 1 9 16" stroke="#fff" stroke-width="2.2" fill="none"/></svg>
<div class="tbi" style="left:493px;width:46px"></div>
<svg style="left:504px;top:1048px" width="24" height="24" viewBox="0 0 24 24"><path d="M3 2 h15 l3 3 v18 h-18 Z" fill="#f0f0e0"/><rect x="3" y="13" width="18" height="10" fill="#4ac020"/><path d="M7 6 v8 M10 8 h5" stroke="#333" stroke-width="1.2"/><path d="M14 16 L22 3" stroke="#e0a030" stroke-width="2"/></svg>
<div class="tbi" style="left:542px;width:46px"></div>
<svg style="left:553px;top:1048px" width="24" height="24" viewBox="0 0 24 24"><rect x="4" y="1" width="16" height="22" rx="2" fill="#a8d0f0" stroke="#5a90c8"/><rect x="6" y="3" width="12" height="5" fill="#e8f4fc"/><g fill="#5a90c8"><rect x="6" y="10" width="3" height="2"/><rect x="10.5" y="10" width="3" height="2"/><rect x="15" y="10" width="3" height="2"/><rect x="6" y="14" width="3" height="2"/><rect x="10.5" y="14" width="3" height="2"/><rect x="15" y="14" width="3" height="6" fill="#f0a020"/><rect x="6" y="18" width="3" height="2"/><rect x="10.5" y="18" width="3" height="2"/></g></svg>
<div class="tbi" style="left:591px;width:46px"></div>
<svg style="left:602px;top:1048px" width="24" height="24" viewBox="0 0 24 24"><rect x="1" y="5" width="22" height="15" fill="#e8e8e8" stroke="#9a9a9a"/><rect x="6" y="8" width="8" height="10" fill="#1a6ad0"/><path d="M15 9 h6 M15 12 h6 M15 15 h6" stroke="#888"/></svg>
<div class="tbi" style="left:640px;width:42px"></div>
<div class="tsep" style="left:682px"></div>
<svg style="left:649px;top:1048px" width="24" height="24" viewBox="0 0 24 24"><path d="M1 4 L6 4 L11 17 L17 4 L23 4" stroke="#1a8aa8" stroke-width="3.5" fill="none"/><path d="M14 2 h8 v7 h-8 Z" fill="#f0a030"/><path d="M10 17 h10 v4 h-10 Z" fill="#1a8aa8"/></svg>
<div class="tbi" style="left:689px;width:46px"></div>
<svg style="left:700px;top:1048px" width="24" height="24" viewBox="0 0 24 24"><ellipse cx="10" cy="5" rx="6" ry="3" fill="#ffe070"/><rect x="4" y="5" width="12" height="11" fill="#f0c830"/><path d="M2 14 v7 h5 M22 2 v0 M17 2 h5 v5" stroke="#3ac040" stroke-width="1.8" fill="none"/><path d="M12 20 L20 12 M12 12 L20 20" stroke="#a070d0" stroke-width="2"/></svg>
<div class="tbi" style="left:738px;width:42px"></div>
<div class="tsep" style="left:780px"></div>
<svg style="left:747px;top:1048px" width="24" height="24" viewBox="0 0 24 24"><path d="M4 6 L16 1 L21 18 L9 23 Z" fill="#c8e8f0"/><path d="M4 6 L16 1 L17 5 L5 10 Z" fill="#6ab0d0"/><path d="M18 3 L22 17 L21 18 Z" fill="#e8c080"/></svg>
<div class="tbi" style="left:787px;width:46px"></div>
<svg style="left:798px;top:1048px" width="24" height="24" viewBox="0 0 24 24"><circle cx="12" cy="12" r="11" fill="#1a90e0"/><path d="M4 9 Q12 14 20 7 Q14 12 13 20 Q11 12 4 9 Z" fill="#0a1a2a"/></svg>
<div class="tbi" style="left:836px;width:46px"></div>
<svg style="left:847px;top:1048px" width="24" height="24" viewBox="0 0 24 24"><path d="M2 1 H17 L22 6 V23 H2 Z" fill="#7a2a8a"/><circle cx="12" cy="13" r="5" fill="none" stroke="#fff" stroke-width="2.5"/><circle cx="14" cy="12" r="2" fill="#7a2a8a"/></svg>
<div class="tbi" style="left:885px;width:46px"></div>
<svg style="left:896px;top:1048px" width="24" height="24" viewBox="0 0 24 24"><defs><linearGradient id="phg" x1="0" y1="0" x2="1" y2="1"><stop offset="0" stop-color="#1a7ae0"/><stop offset="1" stop-color="#9a5ad0"/></linearGradient></defs><rect x="1" y="1" width="22" height="22" rx="3" fill="url(#phg)"/><path d="M1 19 L11 9 L23 20 V21 Q23 23 21 23 H3 Q1 23 1 21 Z" fill="#38c8f0"/><path d="M6 23 L15 14 L23 21 Q23 23 21 23 Z" fill="#1a90e0"/><circle cx="16.5" cy="5.5" r="2" fill="#f0f0f0"/></svg>
<div class="tbi" style="left:934px;width:46px"></div>
<svg style="left:945px;top:1048px" width="24" height="24" viewBox="0 0 24 24"><path d="M8 4 Q12 0 16 4 Q18 7 16 10 Q20 8 19 3 Q23 8 19 14 Q22 18 20 21 Q16 22 15 18 Q12 20 9 18 Q7 22 4 20 Q3 16 6 13 Q2 9 5 3 Q5 8 8 10 Q6 7 8 4 Z" fill="#1a68d8"/><ellipse cx="10" cy="7" rx="1.5" ry="0.8" fill="#e0e8ff"/><ellipse cx="14" cy="7" rx="1.5" ry="0.8" fill="#e0e8ff"/></svg>
<div class="tbi" style="left:983px;width:46px"></div>
<svg style="left:994px;top:1048px" width="24" height="24" viewBox="0 0 24 24"><circle cx="12" cy="12" r="11" fill="#f0f4f0"/><path d="M3 6 A11 11 0 0 1 21 6 Z" fill="#3aa030"/><path d="M1.5 16 A11 11 0 0 0 22.5 16 Z" fill="#8ac88a"/><text x="12" y="16" font-size="10" font-weight="bold" fill="#1a1a1a" text-anchor="middle" font-family="Liberation Sans">HS</text></svg>
<div class="tbi" style="left:1032px;width:46px"></div>
<svg style="left:1043px;top:1048px" width="24" height="24" viewBox="0 0 24 24"><rect x="1" y="2" width="20" height="15" fill="#222" stroke="#ccc"/><path d="M4 5 l2 2 l-2 2" stroke="#ddd" fill="none"/><path d="M7 15 L12 10 L15 14 L10 19 Z" fill="#e53935"/><path d="M12 10 L17 7 L21 11 L15 14 Z" fill="#42a5f5"/><path d="M10 19 L15 14 L20 18 L15 23 Z" fill="#b8e020"/></svg>
<div class="tbi" style="left:1081px;width:46px"></div>
<svg style="left:1092px;top:1048px" width="24" height="24" viewBox="0 0 24 24"><rect x="3" y="4" width="18" height="13" fill="#e8e8e8" stroke="#999"/><path d="M5 11 L8 11 L10 7 L12 13 L14 9 L16 11 L19 11" stroke="#3a90d0" fill="none"/><rect x="7" y="18" width="10" height="2" fill="#bbb"/><rect x="1" y="6" width="3" height="9" fill="#ccc"/></svg>
<div class="tbi" style="left:1130px;width:46px"></div>
<svg style="left:1141px;top:1048px" width="24" height="24" viewBox="0 0 24 24"><rect x="1" y="1" width="22" height="22" rx="5" fill="#1a1816"/><path d="M12 4 L19 8 L17 17 L12 20 L7 17 L5 8 Z" fill="#e0e0e0"/><path d="M12 4 L19 8 L12 12 L5 8 Z" fill="#f8f8f8"/><path d="M12 12 L12 20 L7 17 L5 8 Z" fill="#9a9a9a"/></svg>
<div class="tbi" style="left:1179px;width:46px"></div>
<svg style="left:1190px;top:1048px" width="24" height="24" viewBox="0 0 24 24"><path d="M17 1 L23 4 V20 L17 23 L6 13 L2 16 L0 15 V9 L2 8 L6 11 Z M17 7 L11 12 L17 17 Z" fill="#8a5ad8"/></svg>
<div class="tbi" style="left:1228px;width:46px"></div>
<svg style="left:1239px;top:1048px" width="24" height="24" viewBox="0 0 24 24"><circle cx="12" cy="12" r="11" fill="#7a30b0"/><path d="M9.5 20 v-3 q-4 -0.5 -4.5 -5 q0 -2 1.2 -3.2 q-0.4 -1.5 0.2 -3 q1.5 0 3 1.2 q2.6 -0.7 5.2 0 q1.5 -1.2 3 -1.2 q0.6 1.5 0.2 3 q1.2 1.2 1.2 3.2 q-0.5 4.5 -4.5 5 v3 Z" fill="#fff"/></svg>
<div class="tbi" style="left:1277px;width:46px"></div>
<svg style="left:1288px;top:1048px" width="24" height="24" viewBox="0 0 24 24"><rect x="1" y="1" width="22" height="22" rx="3" fill="#1e1e1e"/><circle cx="9" cy="5" r="3" fill="#f24e1e"/><circle cx="15" cy="5" r="3" fill="#ff7262"/><circle cx="9" cy="11" r="3" fill="#a259ff"/><circle cx="15" cy="11" r="3" fill="#1abcfe"/><circle cx="9" cy="17" r="3" fill="#0acf83"/></svg>
<div class="tbi" style="left:1326px;width:46px"></div>
<svg style="left:1337px;top:1048px" width="24" height="24" viewBox="0 0 24 24"><circle cx="12" cy="12" r="11" fill="#3a86e8"/><circle cx="12" cy="12" r="5.5" fill="#fff"/><circle cx="12" cy="12" r="3.8" fill="#3a86e8"/><path d="M12 1 A11 11 0 0 1 22 8 L12 8 Z" fill="#5aa0f0"/></svg>
<div class="tbi" style="left:1375px;width:46px;background:#68747c;border-color:#a8b0b8"></div>
<svg style="left:1386px;top:1048px" width="24" height="24" viewBox="0 0 24 24"><path d="M5 3 L24 3 L19 21 L0 21 Z" fill="#0e1a30" stroke="#8aa0c8" stroke-width="0.8"/><path d="M5 7 L11 12 L4 17" stroke="#fff" stroke-width="2" fill="none"/><path d="M10 17 h6" stroke="#fff" stroke-width="2"/></svg>
<div class="tbi" style="left:1424px;width:46px"></div>
<svg style="left:1435px;top:1048px" width="24" height="24" viewBox="0 0 24 24"><circle cx="12" cy="12" r="11" fill="#2a8ae8"/><rect x="5" y="6" width="14" height="9" fill="#fff"/><rect x="6" y="7" width="12" height="7" fill="#4aa0f0"/><rect x="8" y="16" width="8" height="2" fill="#fff"/></svg>
<div class="tbi" style="left:1473px;width:46px"></div>
<svg style="left:1484px;top:1048px" width="24" height="24" viewBox="0 0 24 24"><rect x="1" y="1" width="22" height="22" rx="4" fill="#111" stroke="#444"/><text x="6.5" y="17" font-size="9" fill="#4a7ae8" font-family="Liberation Sans" font-weight="bold">m</text><text x="12" y="17" font-size="13" fill="#ddd" font-family="Liberation Sans" font-weight="bold">R</text></svg>
<div class="tbi" style="left:1522px;width:46px"></div>
<svg style="left:1533px;top:1048px" width="24" height="24" viewBox="0 0 24 24"><rect x="1" y="2" width="22" height="21" rx="3" fill="#1a78e0"/><text x="12" y="10" font-size="7" fill="#fff" text-anchor="middle" font-family="Liberation Sans" font-weight="bold">Quick</text><text x="12" y="18" font-size="7" fill="#fff" text-anchor="middle" font-family="Liberation Sans" font-weight="bold">utmo</text></svg>
<svg style="left:1694px;top:1055px" width="14" height="9" viewBox="0 0 14 9"><path d="M1 8 L7 2 L13 8" stroke="#fff" stroke-width="1.3" fill="none"/></svg>
<svg style="left:1719px;top:1053px" width="17" height="16" viewBox="0 0 17 16"><path d="M1 15 A14 14 0 0 1 15 1 M4 15 A11 11 0 0 1 15 4 M7 15 A8 8 0 0 1 15 7" stroke="#ddd" stroke-width="1.3" fill="none"/><circle cx="14" cy="14" r="2" fill="#fff"/></svg>
<svg style="left:1741px;top:1052px" width="18" height="17" viewBox="0 0 18 17"><path d="M1 6 h3 l5 -4 v13 l-5 -4 h-3 Z" stroke="#fff" stroke-width="1.1" fill="none"/><path d="M11 5 q2 3 0 6 M13.5 3 q3.5 5 0 10" stroke="#fff" stroke-width="1.1" fill="none"/></svg>
<div class="abs" style="letter-spacing:-1.010px;left:1768px;top:1053px;font-size:12.5px;color:#fff">РУС</div>
<div class="abs" style="letter-spacing:-0.486px;left:1805px;top:1044px;font-size:12.5px;color:#fff;white-space:nowrap">11:16 AM</div>
<div class="abs" style="letter-spacing:-0.401px;left:1803px;top:1062px;font-size:12.5px;color:#fff;white-space:nowrap">2/23/2026</div>
<svg style="left:1872px;top:1051px" width="28" height="26" viewBox="0 0 28 26"><path d="M1 1 h16 v11 h-12 l-4 3 Z" fill="#fff"/><path d="M4 4 h10 M4 7 h10" stroke="#172640" stroke-width="1"/><circle cx="16" cy="16" r="9" fill="#2a2a2a" stroke="#888" stroke-width="1"/><text x="16" y="20.5" font-size="11" font-weight="bold" fill="#fff" text-anchor="middle" font-family="Liberation Sans">32</text></svg>
</body></html>
